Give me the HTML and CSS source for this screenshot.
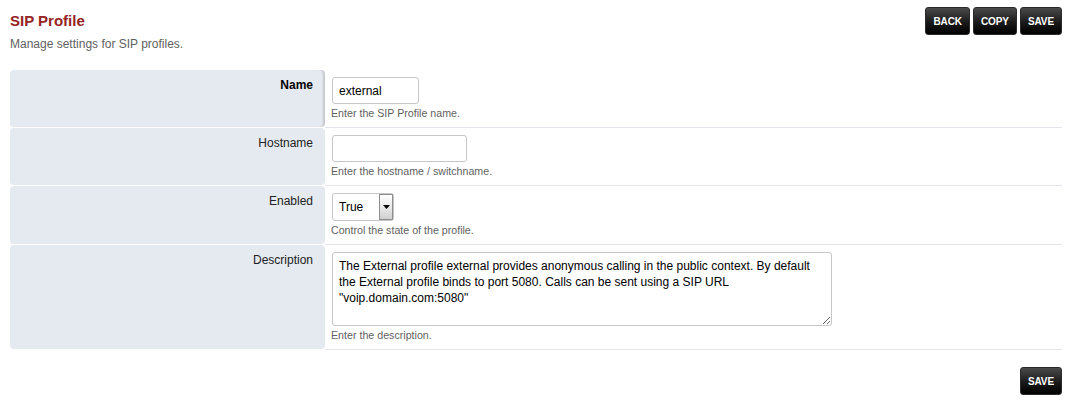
FILE: index.html
```html
<!DOCTYPE html>
<html lang="en">
<head>
<meta charset="utf-8">
<title>SIP Profile</title>
<link rel="stylesheet" href="styles.css">
</head>
<body>
<div class="page">
  <div class="header">
    <div class="heading">
      <h1 class="title">SIP Profile</h1>
      <p class="subtitle">Manage settings for SIP profiles.</p>
    </div>
    <div class="actions">
      <button class="btn" type="button">Back</button>
      <button class="btn" type="button">Copy</button>
      <button class="btn" type="button">Save</button>
    </div>
  </div>

  <form class="form">
    <div class="row">
      <div class="label label-req label-active">Name</div>
      <div class="value">
        <input class="input input-name" type="text" value="external">
        <div class="help">Enter the SIP Profile name.</div>
      </div>
    </div>
    <div class="row">
      <div class="label">Hostname</div>
      <div class="value">
        <input class="input input-host" type="text" value="">
        <div class="help">Enter the hostname / switchname.</div>
      </div>
    </div>
    <div class="row">
      <div class="label">Enabled</div>
      <div class="value">
        <div class="select-wrap">
          <select class="select">
            <option>True</option>
            <option>False</option>
          </select>
          <span class="select-arrow"><svg width="7" height="4" viewBox="0 0 7 4"><path d="M0 0H7L3.5 4Z" fill="#000"/></svg></span>
        </div>
        <div class="help">Control the state of the profile.</div>
      </div>
    </div>
    <div class="row">
      <div class="label">Description</div>
      <div class="value">
        <textarea class="textarea">The External profile external provides anonymous calling in the public context. By default the External profile binds to port 5080. Calls can be sent using a SIP URL "voip.domain.com:5080"</textarea>
        <div class="help">Enter the description.</div>
      </div>
    </div>
  </form>

  <div class="footer">
    <button class="btn" type="button">Save</button>
  </div>
</div>
</body>
</html>
```

FILE: styles.css
```css
* { box-sizing: border-box; }

html, body {
  margin: 0;
  padding: 0;
  background: #fff;
}

body {
  font-family: "Liberation Sans", Arial, sans-serif;
  font-size: 12px;
  color: #222;
}

.page {
  padding: 7px 6px 0 10px;
}

.header {
  display: flex;
  justify-content: space-between;
  align-items: flex-start;
}

.title {
  margin: 5px 0 0;
  font-size: 15px;
  line-height: 18px;
  font-weight: bold;
  color: #952424;
}

.subtitle {
  margin: 7px 0 0;
  font-size: 12px;
  line-height: 14px;
  color: #5f5f5f;
}

.actions {
  display: flex;
  gap: 3px;
}

.btn {
  height: 28px;
  padding: 0 7px;
  border: 1px solid #2a2a2a;
  border-radius: 3px;
  background: linear-gradient(to bottom, #4a4a4a 0%, #1a1a1a 55%, #000 100%);
  color: #fff;
  font-family: "Liberation Sans", Arial, sans-serif;
  font-size: 10px;
  font-weight: bold;
  text-transform: uppercase;
  letter-spacing: -0.1px;
  cursor: pointer;
}

.form {
  margin-top: 19px;
}

.row {
  display: grid;
  grid-template-columns: 315px 1fr;
}

.label {
  background: #e5e9f0;
  border-radius: 4px;
  border-bottom: 1px solid #fff;
  text-align: right;
  padding: 8px 12px 0 0;
  line-height: 14px;
  color: #222;
}

.label-req {
  font-weight: bold;
  color: #000;
}

.label-active {
  box-shadow: inset -3px 0 2px -1px rgba(0, 0, 0, 0.14);
}

.value {
  padding: 7px 7px 8px 7px;
  border-bottom: 1px solid #e3e6ea;
}

.input {
  display: block;
  height: 27px;
  padding: 0 6px;
  border: 1px solid #c6c6c6;
  border-radius: 3px;
  font-family: "Liberation Sans", Arial, sans-serif;
  font-size: 12px;
  color: #000;
  background: #fff;
}

.input-name { width: 87px; }
.input-host { width: 135px; }

.help {
  margin-top: 3px;
  font-size: 10.67px;
  line-height: 12px;
  color: #5f5f5f;
  margin-left: -1px;
}

.select-wrap {
  display: flex;
  width: 62px;
  height: 28px;
  border: 1px solid #c6c6c6;
  border-radius: 3px;
  background: #fff;
}

.select {
  flex: 1;
  min-width: 0;
  -webkit-appearance: none;
  appearance: none;
  border: none;
  background: transparent;
  padding: 0 0 0 6px;
  font-family: "Liberation Sans", Arial, sans-serif;
  font-size: 12px;
  color: #000;
  outline: none;
}

.select-arrow {
  display: flex;
  align-items: center;
  justify-content: center;
  width: 14px;
  border: 1px solid #8e8e8e;
  background: linear-gradient(to bottom, #ffffff 0%, #eaeaea 50%, #cfcfcf 100%);
}

.textarea {
  display: block;
  width: 500px;
  height: 74px;
  padding: 5px 6px;
  border: 1px solid #c6c6c6;
  border-radius: 3px;
  font-family: "Liberation Sans", Arial, sans-serif;
  font-size: 12px;
  line-height: 16px;
  color: #000;
  resize: both;
}

.footer {
  display: flex;
  justify-content: flex-end;
  margin-top: 17px;
}
```
